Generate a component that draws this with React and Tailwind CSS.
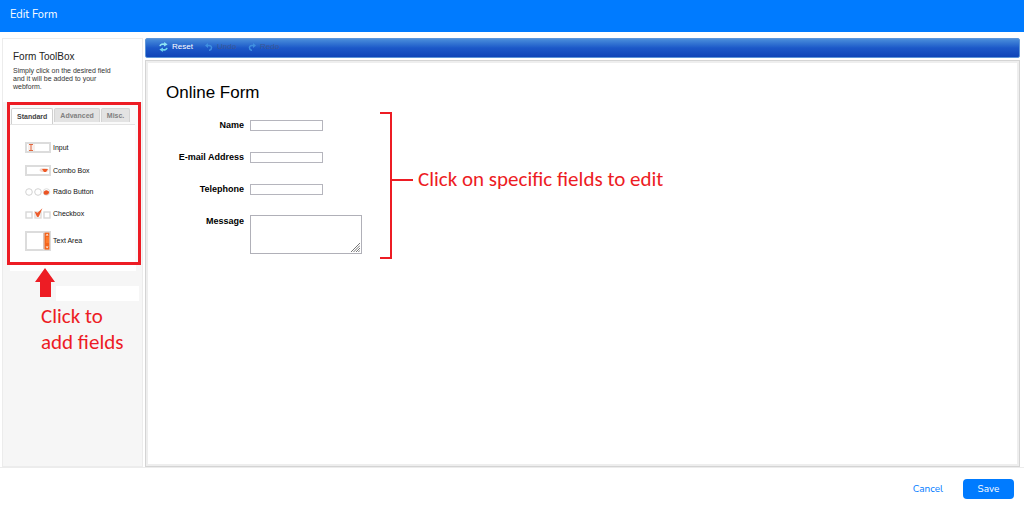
import { useState } from 'react'

const TABS = ['Standard', 'Advanced', 'Misc.']

const FORM_INPUTS = [
  { id: 'name', label: 'Name', type: 'text' },
  { id: 'email', label: 'E-mail Address', type: 'email' },
  { id: 'telephone', label: 'Telephone', type: 'tel' },
]

function InputIcon() {
  return (
    <svg width="26" height="11" viewBox="0 0 26 11" fill="none">
      <rect x="1" y="1" width="24" height="9" stroke="#dcdcdc" strokeWidth="2" />
      <rect x="3" y="2.4" width="7" height="6.4" fill="#f7efec" />
      <path d="M4 2.500h4M4 8.500h4M6 2.500v6" stroke="#e2673f" strokeWidth="1" />
    </svg>
  )
}

function ComboIcon() {
  return (
    <svg width="26" height="11" viewBox="0 0 26 11" fill="none">
      <rect x="1" y="1" width="24" height="9" stroke="#dcdcdc" strokeWidth="2" />
      <ellipse cx="19" cy="5" rx="4.500" ry="2" fill="#f3d9cf" />
      <path d="M17 4h6l-2 3h-2z" fill="#ee5a28" />
    </svg>
  )
}

function RadioIcon() {
  return (
    <svg width="26" height="8" viewBox="0 0 26 8" fill="none">
      <circle cx="4" cy="4" r="3.3" stroke="#d2d2d2" />
      <circle cx="13" cy="4" r="3.3" stroke="#d2d2d2" />
      <circle cx="21.5" cy="4" r="3.3" stroke="#dcdcdc" />
      <path d="M18.600 5c0-2 2-3 3.400-2.600 1.400.2 2.400 1 2 2.400-.4 1.600-1.600 2-2.800 2-1.400 0-2.600-.4-2.600-1.800z" fill="#ea5424" />
    </svg>
  )
}

function CheckboxIcon() {
  return (
    <svg width="26" height="11" viewBox="0 0 26 11" fill="none">
      <rect x="1" y="4" width="6" height="6" stroke="#d8d8d8" strokeWidth="1.4" />
      <rect x="10" y="4" width="6" height="6" stroke="#e0dad7" strokeWidth="1.4" />
      <rect x="19" y="4" width="6" height="6" stroke="#d8d8d8" strokeWidth="1.4" />
      <path d="M9.6 3.6l3 1.2L17.4.2l-3.6 8.600-1.800.2z" fill="#ec5a2a" />
    </svg>
  )
}

function TextAreaIcon() {
  return (
    <svg width="26" height="20" viewBox="0 0 26 20" fill="none">
      <rect x="1" y="1" width="24" height="18" stroke="#dcdcdc" strokeWidth="2" />
      <rect x="18" y="2" width="2" height="16" fill="#d9c4ba" />
      <rect x="19.6" y="1.6" width="4.8" height="17" fill="#f4651c" />
      <rect x="21" y="6" width="3" height="6" fill="#ff7a2c" />
      <path d="M20.6 4.600l1.500-1.800 1.500 1.800zM20.600 15.400l1.500 1.800 1.500-1.800z" fill="#fff" />
    </svg>
  )
}

const TOOLS = [
  { label: 'Input', Icon: InputIcon },
  { label: 'Combo Box', Icon: ComboIcon },
  { label: 'Radio Button', Icon: RadioIcon },
  { label: 'Checkbox', Icon: CheckboxIcon },
  { label: 'Text Area', Icon: TextAreaIcon },
]

function ResetIcon() {
  return (
    <svg width="9" height="10" viewBox="0 0 9 10" fill="none">
      <path d="M1 4.2C1.4 2.4 3.6 1.6 5.8 2.4" stroke="#8fe6f4" strokeWidth="1.6" />
      <path d="M5.2 0l3.4 2.6L5 4.6z" fill="#8fe6f4" />
      <path d="M8 5.8C7.6 7.6 5.4 8.4 3.2 7.6" stroke="#6fd6ef" strokeWidth="1.6" />
      <path d="M3.8 10L.4 7.4 4 5.4z" fill="#6fd6ef" />
    </svg>
  )
}

function UndoIcon({ className }) {
  return (
    <svg width="8" height="8" viewBox="0 0 8 8" fill="none" className={className}>
      <path d="M2 2.6h2.2c3.2 0 3.2 4-.2 4.8" stroke="#3f8fe0" strokeWidth="1.5" />
      <path d="M0 2.6L3 0v5z" fill="#3f8fe0" />
    </svg>
  )
}

function Toolbar() {
  return (
    <div className="flex h-5 items-center rounded-[2px] border border-[#5d95d8] bg-linear-to-b from-[#4a8ddb] via-[#1c58c8] to-[#0f44b8] px-[13px] pb-[2px] text-[8px] leading-[10px]">
      <button type="button" className="flex w-[46px] items-center gap-1 text-white">
        <ResetIcon />
        Reset
      </button>
      <button type="button" disabled className="flex w-[43px] items-center gap-1 text-[#3a5796]">
        <UndoIcon />
        Undo
      </button>
      <button type="button" disabled className="flex items-center gap-1 text-[#3a5796]">
        <UndoIcon className="-scale-x-100" />
        Redo
      </button>
    </div>
  )
}

function Toolbox() {
  const [active, setActive] = useState('Standard')

  return (
    <aside className="flex w-[141px] shrink-0 flex-col border border-[#ececec] bg-[#f6f6f6]">
      <div className="h-[63px] bg-white px-[10px] pt-3">
        <h2 className="text-[10px] leading-3 text-[#222]">Form ToolBox</h2>
        <p className="mt-1 w-[108px] text-[7px] leading-2 text-[#333]">
          Simply click on the desired field and it will be added to your webform.
        </p>
      </div>

      <div className="ml-1 w-[134px] border-3 border-[#ed1c24] bg-[#fafafa] pt-[3px]">
        <div role="tablist" className="mr-[3px] flex h-[17px] gap-px border-b border-[#e4e4e4] pl-px text-[7px] leading-2 font-bold">
          {TABS.map((tab) => (
            <button
              key={tab}
              type="button"
              role="tab"
              aria-selected={active === tab}
              onClick={() => setActive(tab)}
              className={`rounded-t-[2px] border border-b-0 px-[5px] ${
                active === tab
                  ? 'border-[#cfcfcf] bg-white text-[#444]'
                  : 'mb-[2px] border-[#d4d4d4] bg-[#e3e3e3] text-[#808080]'
              }`}
            >
              {tab}
            </button>
          ))}
        </div>
        <ul className="mr-[3px] flex h-[137px] flex-col gap-3 bg-white pt-[17px] pl-[15px]">
          {TOOLS.map(({ label, Icon }) => (
            <li key={label} className="flex">
              <button type="button" className="flex items-center gap-[2px] text-[7px] leading-2 text-[#111]">
                <Icon />
                {label}
              </button>
            </li>
          ))}
        </ul>
      </div>

      <div className="relative">
        <div className="mr-[6px] ml-[7px] h-[6px] bg-white" />
        <div className="mt-[15px] mr-[3px] ml-[53px] h-[15px] bg-white" />
        <svg width="20" height="29" viewBox="0 0 20 29" className="absolute top-[3px] left-8">
          <path d="M10 0l10 14h-4v15H5V14H0z" fill="#ed1c24" />
        </svg>
      </div>
      <p className="mt-[2px] ml-[38px] font-['Carlito','Lato',sans-serif] text-[21px] leading-[26px] text-[#ed1c24]">
        Click to
        <br />
        add fields
      </p>
    </aside>
  )
}

function FormPreview() {
  return (
    <div className="flex-1 border border-[#d4d4d4] bg-white p-[2px] outline-2 -outline-offset-3 outline-[#eeeeee]">
      <div className="px-[18px] pt-5">
        <h1 className="text-[17px] leading-5 text-black">Online Form</h1>
        <div className="mt-[9px] flex items-start">
          <form className="mt-[7px] flex w-[196px] flex-col gap-5">
            {FORM_INPUTS.map((field) => (
              <div key={field.id} className="flex h-3 items-center">
                <label htmlFor={field.id} className="w-[78px] text-right text-[9px] leading-3 font-bold whitespace-nowrap text-black">
                  {field.label}
                </label>
                <input id={field.id} type={field.type} className="ml-[6px] h-[11px] w-[73px] border border-[#b5b5bd] bg-white px-1 text-[8px]" />
              </div>
            ))}
            <div className="flex items-start">
              <label htmlFor="message" className="w-[78px] text-right text-[9px] leading-3 font-bold text-black">
                Message
              </label>
              <div className="relative ml-[6px] flex">
                <textarea id="message" className="h-[39px] w-[112px] resize-none border border-[#b0b0b8] bg-white px-1 text-[8px]" />
                <svg width="9" height="9" viewBox="0 0 9 9" className="pointer-events-none absolute right-[2px] bottom-[2px]">
                  <path d="M0 9L9 0M2.500 9L9 2.500M5 9L9 5M7.300 9L9 7.300" stroke="#777" strokeWidth="1" />
                </svg>
              </div>
            </div>
          </form>
          <svg width="33" height="147" viewBox="0 0 33 147" fill="none" className="ml-[18px] shrink-0">
            <path d="M0 1h11v145H0M11 68h22" stroke="#ed1c24" strokeWidth="2" />
          </svg>
          <p className="mt-[54px] ml-[5px] font-['Carlito','Lato',sans-serif] text-[21px] leading-[26px] text-[#ed1c24]">
            Click on specific fields to edit
          </p>
        </div>
      </div>
    </div>
  )
}

export default function App() {
  return (
    <div className="flex min-h-screen flex-col bg-white font-['Liberation_Sans',Arial,sans-serif]">
      <header className="flex h-8 items-center bg-[#007bff] px-[10px] pb-[2px] font-['Nunito','Open_Sans',sans-serif] text-[11px] text-white">
        Edit Form
      </header>

      <main className="flex flex-1 gap-[2px] pt-[6px] pr-1 pl-[2px]">
        <Toolbox />
        <section className="flex min-w-0 flex-1 flex-col gap-[2px]">
          <Toolbar />
          <FormPreview />
        </section>
      </main>

      <footer className="flex h-[38px] items-center justify-end gap-5 border-t border-[#ececec] pt-1 pr-[10px] font-['Nunito','Open_Sans',sans-serif] text-[10px] leading-3">
        <button type="button" className="text-[#007bff]">Cancel</button>
        <button type="button" className="h-5 w-[51px] rounded-[4px] bg-[#007bff] text-white">Save</button>
      </footer>
    </div>
  )
}
